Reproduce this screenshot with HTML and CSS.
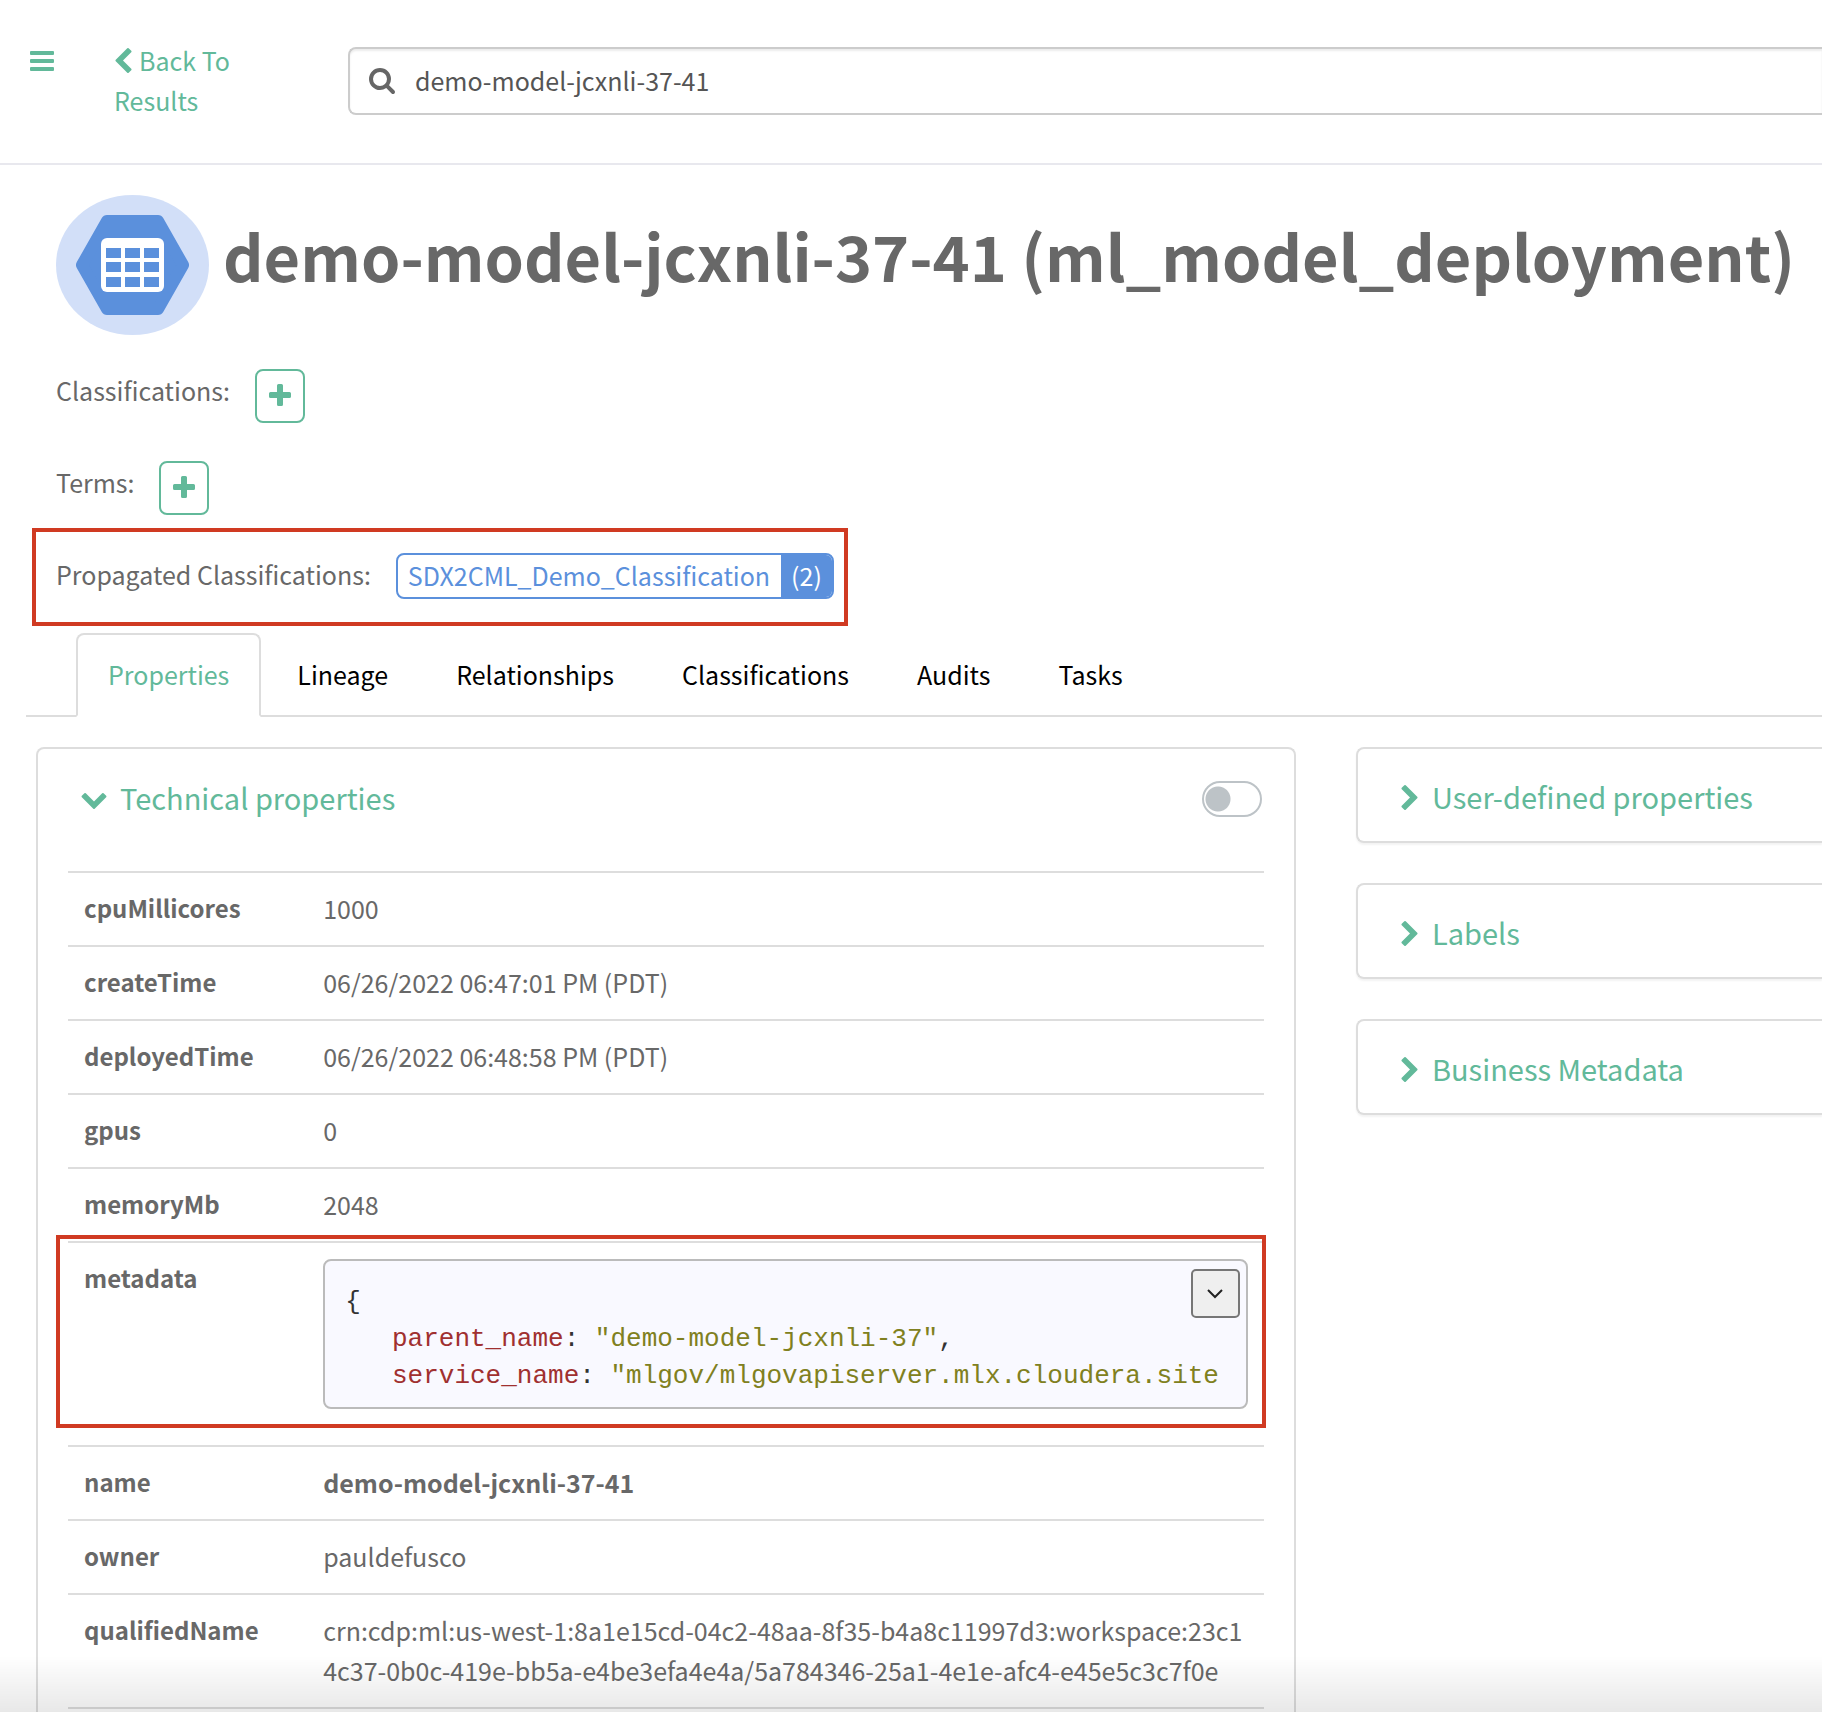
FILE: index.html
```html
<!DOCTYPE html>
<html lang="en">
<head>
<meta charset="utf-8">
<title>demo-model-jcxnli-37-41 (ml_model_deployment)</title>
<link rel="stylesheet" href="styles.css">
</head>
<body>
<svg class="sprite" aria-hidden="true">
  <symbol id="chevron" viewBox="154 26 1036 1612"><path d="M1171 301l-531 531 531 531q19 19 19 45t-19 45l-166 166q-19 19-45 19t-45-19l-742-742q-19-19-19-45t19-45l742-742q19-19 45-19t45 19l166 166q19 19 19 45t-19 45z"/></symbol>
  <symbol id="plus" viewBox="0 0 22 22"><path d="M9.500 0h3q1.500 0 1.500 1.500v6.500h6.500q1.500 0 1.500 1.500v3q0 1.500-1.500 1.500h-6.500v6.500q0 1.500-1.500 1.500h-3q-1.500 0-1.500-1.500v-6.500h-6.500q-1.500 0-1.500-1.500v-3q0-1.500 1.500-1.500h6.500v-6.500q0-1.500 1.500-1.500z"/></symbol>
</svg>

<header class="topbar">
  <button class="menu-button" aria-label="Menu"><span></span><span></span><span></span></button>
  <a class="back-link" href="#results"><svg class="icon-left" aria-hidden="true"><use href="#chevron"/></svg>Back To Results</a>
  <label class="search">
    <svg class="icon-search" viewBox="0 128 1664 1664" aria-hidden="true"><path d="M1152 832q0-185-131.5-316.5t-316.5-131.5-316.5 131.5-131.5 316.5 131.5 316.5 316.5 131.5 316.5-131.5 131.5-316.5zm512 832q0 52-38 90t-90 38q-54 0-90-38l-343-342q-179 124-399 124-143 0-273.5-55.5t-225-150-150-225-55.5-273.5 55.5-273.5 150-225 225-150 273.5-55.5 273.5 55.5 225 150 150 225 55.5 273.5q0 220-124 399l343 343q37 37 37 90z"/></svg>
    <input type="text" aria-label="Search" value="demo-model-jcxnli-37-41">
  </label>
</header>

<main>
  <section class="entity">
    <div class="entity-title">
      <svg class="entity-icon" viewBox="0 0 153 140" aria-hidden="true">
        <ellipse cx="76.500" cy="70" rx="76.500" ry="70" fill="#d2dff8"/>
        <path d="M51 26h51l25 44-25 44H51L26 70z" fill="#5b90dc" stroke="#5b90dc" stroke-width="12" stroke-linejoin="round"/>
        <rect x="45" y="43" width="63" height="54" rx="6" fill="#fff"/>
        <path d="M50 53h15v10H50zM69 53h15v10H69zM88 53h15v10H88zM50 67h15v10H50zM69 67h15v10H69zM88 67h15v10H88zM50 82h15v10H50zM69 82h15v10H69zM88 82h15v10H88z" fill="#5b90dc"/>
      </svg>
      <h1>demo-model-jcxnli-37-41 (ml_model_deployment)</h1>
    </div>
    <div class="meta-row">
      <span class="meta-label">Classifications:</span>
      <button class="add-button" aria-label="Add classification"><svg aria-hidden="true"><use href="#plus"/></svg></button>
    </div>
    <div class="meta-row">
      <span class="meta-label">Terms:</span>
      <button class="add-button" aria-label="Add term"><svg aria-hidden="true"><use href="#plus"/></svg></button>
    </div>
    <div class="meta-row meta-row-marked">
      <span class="meta-label">Propagated Classifications:</span>
      <div class="tag"><a class="tag-name" href="#classification">SDX2CML_Demo_Classification</a><a class="tag-count" href="#propagated">(2)</a></div>
    </div>
  </section>

  <nav class="tabs">
    <a class="tab tab-active" href="#properties">Properties</a>
    <a class="tab" href="#lineage">Lineage</a>
    <a class="tab" href="#relationships">Relationships</a>
    <a class="tab" href="#classifications">Classifications</a>
    <a class="tab" href="#audits">Audits</a>
    <a class="tab" href="#tasks">Tasks</a>
  </nav>

  <div class="columns">
    <section class="panel">
      <div class="panel-head">
        <h2><svg class="icon-down" viewBox="0 0 1612 1036" aria-hidden="true"><path transform="translate(-26 1190) rotate(-90)" d="M1171 301l-531 531 531 531q19 19 19 45t-19 45l-166 166q-19 19-45 19t-45-19l-742-742q-19-19-19-45t19-45l742-742q19-19 45-19t45 19l166 166q19 19 19 45t-19 45z"/></svg>Technical properties</h2>
        <input class="toggle" type="checkbox" role="switch" aria-label="Show empty values">
      </div>
      <table class="props">
        <tr><th scope="row">cpuMillicores</th><td>1000</td></tr>
        <tr><th scope="row">createTime</th><td>06/26/2022 06:47:01 PM (PDT)</td></tr>
        <tr><th scope="row">deployedTime</th><td>06/26/2022 06:48:58 PM (PDT)</td></tr>
        <tr><th scope="row">gpus</th><td>0</td></tr>
        <tr><th scope="row">memoryMb</th><td>2048</td></tr>
        <tr class="row-marked"><th scope="row">metadata</th><td class="cell-code"><div class="code"><pre>{
   <span class="key">parent_name</span>: <span class="string">"demo-model-jcxnli-37"</span>,
   <span class="key">service_name</span>: <span class="string">"mlgov/mlgovapiserver.mlx.cloudera.site</span></pre><button class="expand" aria-label="Expand"><svg viewBox="0 0 16 10" aria-hidden="true"><path d="M1 1l7 7 7-7" fill="none" stroke="#222" stroke-width="2"/></svg></button></div></td></tr>
        <tr><th scope="row">name</th><td><strong>demo-model-jcxnli-37-41</strong></td></tr>
        <tr><th scope="row">owner</th><td>pauldefusco</td></tr>
        <tr><th scope="row">qualifiedName</th><td>crn:cdp:ml:us-west-1:8a1e15cd-04c2-48aa-8f35-b4a8c11997d3:workspace:23c14c37-0b0c-419e-bb5a-e4be3efa4e4a/5a784346-25a1-4e1e-afc4-e45e5c3c7f0e</td></tr>
      </table>
    </section>
    <aside class="cards">
      <button class="card"><svg class="icon-right" viewBox="-1190 26 1036 1612" aria-hidden="true"><path transform="scale(-1 1)" d="M1171 301l-531 531 531 531q19 19 19 45t-19 45l-166 166q-19 19-45 19t-45-19l-742-742q-19-19-19-45t19-45l742-742q19-19 45-19t45 19l166 166q19 19 19 45t-19 45z"/></svg>User-defined properties</button>
      <button class="card"><svg class="icon-right" viewBox="-1190 26 1036 1612" aria-hidden="true"><path transform="scale(-1 1)" d="M1171 301l-531 531 531 531q19 19 19 45t-19 45l-166 166q-19 19-45 19t-45-19l-742-742q-19-19-19-45t19-45l742-742q19-19 45-19t45 19l166 166q19 19 19 45t-19 45z"/></svg>Labels</button>
      <button class="card"><svg class="icon-right" viewBox="-1190 26 1036 1612" aria-hidden="true"><path transform="scale(-1 1)" d="M1171 301l-531 531 531 531q19 19 19 45t-19 45l-166 166q-19 19-45 19t-45-19l-742-742q-19-19-19-45t19-45l742-742q19-19 45-19t45 19l166 166q19 19 19 45t-19 45z"/></svg>Business Metadata</button>
    </aside>
  </div>
</main>
<div class="fade"></div>
</body>
</html>
```
FILE: styles.css
```css
* { box-sizing: border-box; }

body {
  margin: 0;
  min-height: 100vh;
  display: flex;
  flex-direction: column;
  background: #fff;
  color: #686868;
  font: 25px/40px "Noto Sans CJK SC", "Noto Sans", sans-serif;
}

button, input { font: inherit; }
button { cursor: pointer; }
a { text-decoration: none; }
svg { fill: currentColor; flex: none; }
.sprite { position: absolute; width: 0; height: 0; }

/* Top bar */
.topbar {
  display: flex;
  align-items: flex-start;
  height: 165px;
  padding: 40px 0 0 30px;
  border-bottom: 2px solid #e8e8ee;
}
.menu-button {
  display: flex;
  flex-direction: column;
  gap: 4px;
  width: 24px;
  margin: 11px 60px 0 0;
  padding: 0;
  border: 0;
  background: none;
}
.menu-button span { height: 4px; border-radius: 1px; background: #62b99a; }
.back-link { width: 140px; margin-right: 94px; color: #62b99a; }
.icon-left { width: 17px; height: 25px; margin: 0 7px 0 1px; vertical-align: -2px; }
.search {
  flex: 1;
  display: flex;
  align-items: center;
  gap: 20px;
  height: 68px;
  margin-top: 7px;
  padding-left: 19px;
  border: 2px solid #ccc;
  border-right: 0;
  border-radius: 8px 0 0 8px;
  box-shadow: inset 0 2px 2px rgba(0, 0, 0, .075);
}
.icon-search { width: 26px; height: 26px; color: #666; }
.search input {
  flex: 1;
  min-width: 0;
  padding: 0 0 2px;
  border: 0;
  outline: 0;
  background: none;
  color: #555;
}

main { flex: 1; display: flex; flex-direction: column; }

/* Entity summary */
.entity {
  display: flex;
  flex-direction: column;
  gap: 38px;
  padding: 30px 0 26px 56px;
}
.entity-title { display: flex; gap: 14px; margin-bottom: -4px; }
.entity-icon { width: 153px; height: 140px; }
h1 {
  margin: 20px 0 0;
  font-size: 63px;
  line-height: 80px;
  font-weight: 700;
  white-space: nowrap;
}
.meta-row { display: flex; align-items: flex-start; gap: 25px; height: 54px; }
.meta-label { padding-top: 1px; }
.add-button {
  display: grid;
  place-items: center;
  width: 50px;
  height: 54px;
  padding: 0 0 2px;
  border: 2px solid #62b99a;
  border-radius: 8px;
  background: #fff;
  color: #62b99a;
}
.add-button svg { width: 22px; height: 22px; }
.meta-row-marked { position: relative; width: fit-content; }
.meta-row-marked::after {
  content: "";
  position: absolute;
  inset: -25px -14px -19px -24px;
  border: 4px solid #d03a22;
  pointer-events: none;
}
.tag {
  display: flex;
  height: 46px;
  border: 2px solid #5b90dc;
  border-radius: 8px;
  overflow: hidden;
}
.tag-name { padding: 0 11px 0 10px; color: #5b90dc; }
.tag-count { padding: 0 10px; background: #5b90dc; color: #fff; }

/* Tabs */
.tabs {
  display: flex;
  gap: 4px;
  margin-left: 26px;
  padding-left: 50px;
  border-bottom: 2px solid #ddd;
}
.tab {
  margin-bottom: -2px;
  padding: 19px 30px 21px;
  border: 2px solid transparent;
  border-radius: 8px 8px 0 0;
  color: #000;
}
.tab-active { border-color: #ddd #ddd #fff; background: #fff; color: #62b99a; }

/* Properties */
.columns {
  flex: 1;
  display: grid;
  grid-template-columns: 73fr 27fr;
  gap: 60px;
  padding: 30px 0 0 36px;
}
.panel {
  min-width: 0;
  padding: 28px 30px 3px;
  border: 2px solid #ddd;
  border-bottom: 0;
  border-radius: 8px 8px 0 0;
}
.panel-head {
  display: flex;
  justify-content: space-between;
  align-items: center;
  margin-bottom: 54px;
  padding: 0 2px 0 13px;
}
h2 {
  display: flex;
  align-items: center;
  gap: 13px;
  margin: 0;
  color: #62b99a;
  font-size: 29px;
  line-height: 40px;
  font-weight: 400;
}
.icon-down { width: 26px; height: 16px; margin-top: 8px; }
.toggle {
  appearance: none;
  width: 60px;
  height: 36px;
  margin: 4px 0 0;
  border: 2px solid #bdc3c7;
  border-radius: 18px;
  background: radial-gradient(circle at 14px 16px, #bdc3c7 12px, #fff 13px);
}
.props {
  width: 100%;
  table-layout: fixed;
  border-spacing: 0;
  border-bottom: 2px solid #ddd;
}
.props th, .props td {
  padding: 15px 16px 17px;
  border-top: 2px solid #ddd;
  text-align: left;
  vertical-align: top;
  word-break: break-all;
}
.props th { width: 20%; font-size: 24px; }
.row-marked { position: relative; }
.row-marked th::after {
  content: "";
  position: absolute;
  inset: -6px -2px 17px -12px;
  border: 4px solid #d03a22;
  pointer-events: none;
}
.props .cell-code { padding: 16px 16px 36px; }
.code {
  position: relative;
  height: 150px;
  padding: 23px 20px 0;
  border: 2px solid #bbb;
  border-radius: 8px;
  background: #f9f9ff;
}
.code pre {
  margin: 0;
  overflow: hidden;
  color: #333;
  font: 26px/37px "Liberation Mono", monospace;
}
.key { color: #a03030; }
.string { color: #808020; }
.expand {
  position: absolute;
  top: 8px;
  right: 6px;
  display: grid;
  place-items: center;
  width: 49px;
  height: 49px;
  padding: 0;
  border: 2px solid #767676;
  border-radius: 5px;
  background: #efefef;
}
.expand svg { width: 16px; height: 10px; }

/* Side cards */
.cards { display: flex; flex-direction: column; gap: 40px; }
.card {
  display: flex;
  align-items: center;
  gap: 14px;
  height: 96px;
  padding: 2px 0 0 43px;
  border: 2px solid #ddd;
  border-right: 0;
  border-radius: 8px 0 0 8px;
  background: #fff;
  box-shadow: 0 2px 2px rgba(0, 0, 0, .05);
  color: #62b99a;
  font-size: 29px;
}
.icon-right { width: 17px; height: 25px; margin-top: 2px; }

/* Shade along the window's lower edge */
.fade {
  position: fixed;
  inset: auto 0 0;
  height: 56px;
  background: linear-gradient(rgba(0, 0, 0, 0), rgba(0, 0, 0, .09));
  pointer-events: none;
}
```
